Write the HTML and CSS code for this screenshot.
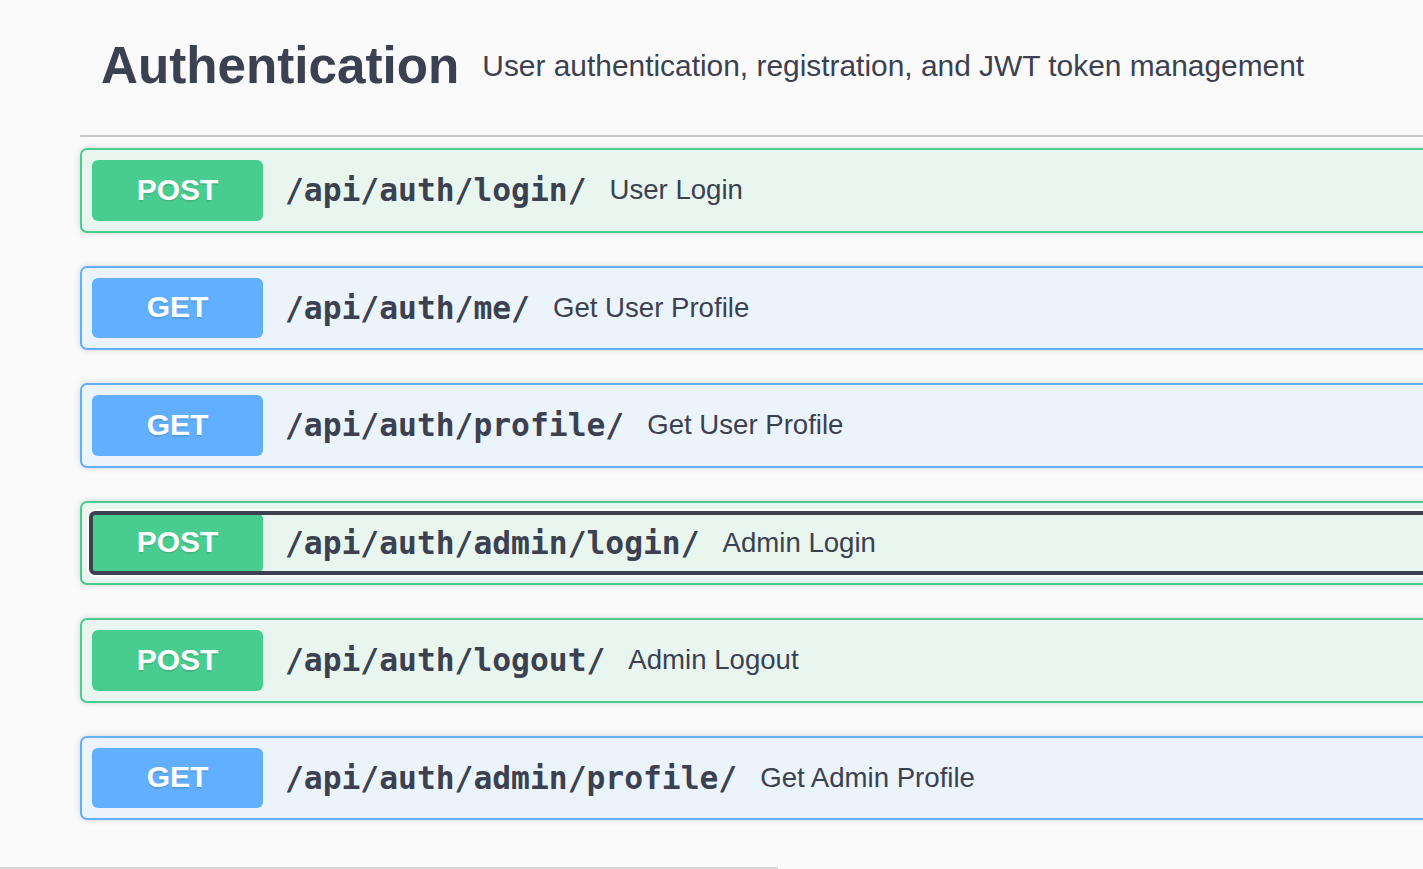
FILE: index.html
```html
<!DOCTYPE html>
<html lang="en">
<head>
<meta charset="utf-8">
<title>Authentication</title>
<link rel="stylesheet" href="styles.css">
</head>
<body>
<div class="wrapper">
  <div class="tag-header">
    <h4 class="tag-title">Authentication</h4>
    <span class="tag-desc">User authentication, registration, and JWT token management</span>
  </div>
  <div class="opblock post">
    <div class="summary">
      <span class="method">POST</span>
      <span class="path">/api/auth/login/</span>
      <span class="desc">User Login</span>
    </div>
  </div>
  <div class="opblock get">
    <div class="summary">
      <span class="method">GET</span>
      <span class="path">/api/auth/me/</span>
      <span class="desc">Get User Profile</span>
    </div>
  </div>
  <div class="opblock get">
    <div class="summary">
      <span class="method">GET</span>
      <span class="path">/api/auth/profile/</span>
      <span class="desc">Get User Profile</span>
    </div>
  </div>
  <div class="opblock post">
    <div class="summary focused">
      <span class="method">POST</span>
      <span class="path">/api/auth/admin/login/</span>
      <span class="desc">Admin Login</span>
    </div>
  </div>
  <div class="opblock post">
    <div class="summary">
      <span class="method">POST</span>
      <span class="path">/api/auth/logout/</span>
      <span class="desc">Admin Logout</span>
    </div>
  </div>
  <div class="opblock get">
    <div class="summary">
      <span class="method">GET</span>
      <span class="path">/api/auth/admin/profile/</span>
      <span class="desc">Get Admin Profile</span>
    </div>
  </div>
</div>
<div class="scroll-thumb"></div>
</body>
</html>
```
FILE: styles.css
```css
html, body {
  margin: 0;
  padding: 0;
  background: #fafafa;
  overflow: hidden;
  height: 869px;
}
body {
  font-family: "Liberation Sans", Arial, sans-serif;
  color: #3b4151;
}
.wrapper {
  margin-left: 80px;
  width: 1700px;
}
.tag-header {
  box-sizing: border-box;
  height: 137px;
  display: flex;
  align-items: center;
  padding: 0 0 3px 21px;
  border-bottom: 2px solid #c9cace;
  margin-bottom: 11px;
}
.tag-title {
  margin: 0;
  font-size: 51.2px;
  font-weight: bold;
  line-height: 1.15;
  color: #3b4151;
}
.tag-desc {
  margin-left: 23px;
  font-size: 29.9px;
  color: #3b4151;
}
.opblock {
  box-sizing: border-box;
  height: 84.5px;
  border: 2px solid;
  border-radius: 7px;
  margin-bottom: 33px;
  box-shadow: 0 0 6px rgba(0, 0, 0, 0.15);
}
.opblock.post {
  border-color: #49cc90;
  background: #e8f6ef;
}
.opblock.get {
  border-color: #61affe;
  background: #ebf3fb;
}
.summary {
  box-sizing: border-box;
  height: 100%;
  display: flex;
  align-items: center;
  padding: 0 10px 0 10px;
  position: relative;
}
.method {
  box-sizing: border-box;
  width: 171px;
  height: 60.5px;
  border-radius: 6px;
  display: flex;
  align-items: center;
  justify-content: center;
  color: #fff;
  font-size: 30px;
  font-weight: bold;
  text-shadow: 0 2px 0 rgba(0, 0, 0, 0.1);
  padding-bottom: 1px;
}
.post .method { background: #49cc90; }
.get .method { background: #61affe; }
.path {
  font-family: "DejaVu Sans Mono", "Liberation Mono", monospace;
  font-weight: bold;
  font-size: 31.3px;
  color: #3b4151;
  padding: 0 23px 0 22px;
}
.desc {
  font-size: 27.6px;
  color: #3b4151;
}
.summary.focused::after {
  content: "";
  position: absolute;
  left: 7px;
  top: 8px;
  bottom: 8px;
  right: -20px;
  border: 4px solid #3b4151;
  border-radius: 6px;
  box-shadow: 0 0 0 2px #fff;
  pointer-events: none;
}
.scroll-thumb {
  position: fixed;
  left: 0;
  bottom: 0;
  width: 778px;
  height: 2px;
  background: #d6d6d6;
}
```
